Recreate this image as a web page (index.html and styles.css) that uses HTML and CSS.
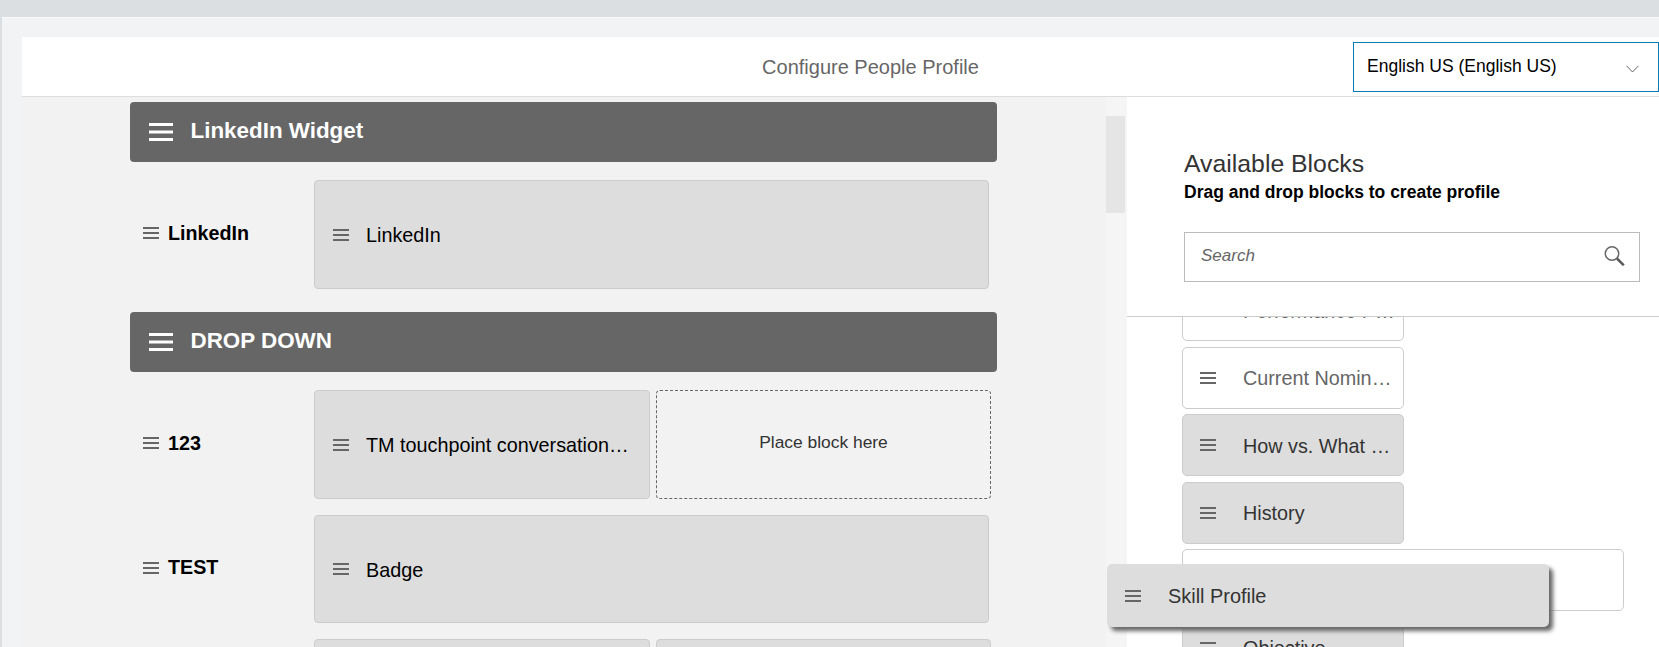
FILE: index.html
```html
<!DOCTYPE html>
<html lang="en">
<head>
<meta charset="utf-8">
<title>Configure People Profile</title>
<link rel="stylesheet" href="styles.css">
</head>
<body>
<svg class="defs" width="0" height="0" aria-hidden="true">
  <symbol id="bars" viewBox="0 0 16 12"><rect y="0" width="16" height="2"/><rect y="5" width="16" height="2"/><rect y="10" width="16" height="2"/></symbol>
  <symbol id="bars-lg" viewBox="0 0 24 18"><rect y="0" width="24" height="3"/><rect y="7.5" width="24" height="3"/><rect y="15" width="24" height="3"/></symbol>
</svg>
<div class="frame">
  <div class="app">
    <header class="topbar">
      <div class="topbar-title">Configure People Profile</div>
      <div class="lang">
        <span>English US (English US)</span>
        <svg class="chev" viewBox="0 0 13 8"><path d="M.5.8 6.5 7 12.5.8"/></svg>
      </div>
    </header>
    <div class="main">
      <section class="canvas">
        <div class="group first">
          <svg class="ic-lg"><use href="#bars-lg"/></svg><span>LinkedIn Widget</span>
        </div>
        <div class="row r1">
          <div class="label"><svg class="ic"><use href="#bars"/></svg><span>LinkedIn</span></div>
          <div class="cells"><div class="block wide"><svg class="ic"><use href="#bars"/></svg><span class="name">LinkedIn</span></div></div>
        </div>
        <div class="group second">
          <svg class="ic-lg"><use href="#bars-lg"/></svg><span>DROP DOWN</span>
        </div>
        <div class="row r1">
          <div class="label"><svg class="ic"><use href="#bars"/></svg><span>123</span></div>
          <div class="cells">
            <div class="block half"><svg class="ic"><use href="#bars"/></svg><span class="name">TM touchpoint conversation notes</span></div>
            <div class="slot">Place block here</div>
          </div>
        </div>
        <div class="row r2">
          <div class="label"><svg class="ic"><use href="#bars"/></svg><span>TEST</span></div>
          <div class="cells"><div class="block wide"><svg class="ic"><use href="#bars"/></svg><span class="name">Badge</span></div></div>
        </div>
        <div class="row r2">
          <div class="label"></div>
          <div class="cells">
            <div class="block half"></div>
            <div class="block half alt"></div>
          </div>
        </div>
      </section>
      <div class="scroll"><div class="thumb"></div></div>
      <aside class="panel">
        <div class="panel-head">
          <h2 class="panel-title">Available Blocks</h2>
          <p class="panel-sub">Drag and drop blocks to create profile</p>
          <div class="search">
            <span>Search</span>
            <svg class="mag" viewBox="0 0 21 20"><circle cx="8" cy="7.500" r="6.700"/><path class="mag-handle" d="M13 12.500 19.800 19.300"/></svg>
          </div>
        </div>
        <div class="list">
          <div class="list-inner">
            <div class="item off"><svg class="ic"><use href="#bars"/></svg><span class="name">Performance Priorities</span></div>
            <div class="item off"><svg class="ic"><use href="#bars"/></svg><span class="name">Current Nominations</span></div>
            <div class="item"><svg class="ic"><use href="#bars"/></svg><span class="name">How vs. What Matrix</span></div>
            <div class="item"><svg class="ic"><use href="#bars"/></svg><span class="name">History</span></div>
            <div class="item off long"></div>
            <div class="item"><svg class="ic"><use href="#bars"/></svg><span class="name">Objective</span></div>
          </div>
        </div>
      </aside>
    </div>
  </div>
</div>
<div class="drag"><svg class="ic"><use href="#bars"/></svg><span class="name">Skill Profile</span></div>
</body>
</html>
```

FILE: styles.css
```css
* { box-sizing: border-box; }
html, body { margin: 0; height: 100%; overflow: hidden; }
body {
  background: #dcdfe2;
  font-family: "Liberation Sans", Arial, sans-serif;
  color: #000;
  padding: 17px 0 0 2px;
  position: relative;
}
.defs { position: absolute; }
.frame {
  height: 630px;
  background: #f2f3f5;
  border-top: 1px solid #f8f9fa;
  padding: 19px 0 0 20px;
  overflow: hidden;
}
.app { height: 100%; display: flex; flex-direction: column; }
.topbar {
  flex: none;
  height: 60px;
  background: #fff;
  border-bottom: 1px solid #ddd;
  display: flex;
  align-items: center;
  position: relative;
}
.topbar-title { font-size: 20px; color: #666; width: 100%; text-align: center; padding: 2px 0 0 60px; }
.lang {
  position: absolute;
  right: 0;
  top: 5px;
  width: 306px;
  height: 50px;
  border: 1px solid #0a7bb5;
  padding: 0 19px 2px 13px;
  display: flex;
  align-items: center;
  justify-content: space-between;
  font-size: 17.500px;
  background: #fff;
}
.chev { width: 13px; height: 8px; margin-top: 5px; fill: none; stroke: #666; stroke-width: 1; }
.main { flex: 1; min-height: 0; display: flex; background: #f2f2f2; }
.canvas { width: 1084px; flex: none; padding-left: 108px; overflow: hidden; }
.group {
  width: 867px;
  height: 60px;
  background: #666;
  border-radius: 4px;
  color: #fff;
  font-weight: 700;
  font-size: 22.400px;
  display: flex;
  align-items: center;
  padding: 0 0 0 18.500px;
}
.group span { margin-left: 18px; margin-top: -2px; }
.group.first { margin-top: 5px; }
.group.second { margin-top: 23px; }
.ic-lg { width: 24px; height: 18px; fill: #fff; flex: none; }
.ic { width: 16px; height: 12px; fill: #666; flex: none; }
.row { display: flex; }
.row.r1 { margin-top: 18px; height: 109px; }
.row.r2 { margin-top: 16px; height: 108px; }
.label {
  width: 184px;
  flex: none;
  display: flex;
  align-items: center;
  padding: 0 0 3px 13px;
  font-weight: 700;
  font-size: 19.700px;
}
.label span { margin-left: 9px; }
.cells { display: flex; gap: 6px; }
.block {
  background: #ddd;
  border: 1px solid #ccc;
  border-radius: 4px;
  display: flex;
  align-items: center;
  padding: 0 15.500px 0 18px;
  font-size: 19.800px;
}
.block .name { margin-left: 17px; padding-top: 2px; min-width: 0; white-space: nowrap; overflow: hidden; text-overflow: ellipsis; }
.wide { width: 675px; }
.half { width: 336px; }
.half.alt { width: 335px; }
.slot {
  width: 335px;
  border: 1px dashed #666;
  border-radius: 4px;
  display: flex;
  align-items: center;
  justify-content: center;
  font-size: 17.400px;
  color: #333;
  padding-bottom: 4px;
}
.scroll { width: 19px; flex: none; background: #f5f5f5; margin-right: 2px; padding-top: 19px; position: relative; }
.scroll::after { content: ""; position: absolute; top: 0; bottom: 0; left: 19px; width: 2px; background: #f5f5f5; }
.thumb { height: 97px; background: #e5e5e5; }
.panel { flex: 1; min-width: 0; background: #fff; display: flex; flex-direction: column; }
.panel-head { flex: none; height: 220px; border-bottom: 1px solid #ccc; padding: 52px 0 0 57px; }
.panel-title { margin: 0; font-size: 24.800px; line-height: 30px; font-weight: 400; color: #333; }
.panel-sub { margin: 2px 0 0; font-size: 17.500px; line-height: 22px; font-weight: 700; }
.search {
  margin-top: 29px;
  width: 456px;
  height: 50px;
  border: 1px solid #bbb;
  display: flex;
  align-items: center;
  justify-content: space-between;
  padding: 0 14px 0 16px;
  font-style: italic;
  font-size: 17px;
  color: #666;
}
.search span { margin-bottom: 3px; }
.mag { width: 21px; height: 20px; margin-top: -2px; fill: none; stroke: #666; stroke-width: 1.500; }
.mag-handle { stroke-width: 2.500; stroke: #5a5a5a; }
.list { flex: 1; min-height: 0; overflow: hidden; padding-left: 55px; }
.list-inner { margin-top: -38px; display: flex; flex-direction: column; gap: 5.500px; }
.item {
  width: 222px;
  height: 62px;
  background: #ddd;
  border: 1px solid #ccc;
  border-radius: 5px;
  display: flex;
  align-items: center;
  padding-left: 17px;
  font-size: 19.800px;
  color: #333;
  flex: none;
}
.item .name { margin-left: 27px; padding: 2px 8px 0 0; min-width: 0; white-space: nowrap; overflow: hidden; text-overflow: ellipsis; }
.item.off { background: #fff; color: #666; }
.item.long { width: 442px; }
.drag {
  position: absolute;
  left: 1107px;
  top: 564px;
  width: 442px;
  height: 63px;
  background: #ddd;
  border-radius: 5px;
  box-shadow: 4px 4px 4px #666;
  display: flex;
  align-items: center;
  padding-left: 18px;
  font-size: 19.900px;
  color: #333;
}
.drag .name { margin-left: 27px; padding-top: 1px; }
```
